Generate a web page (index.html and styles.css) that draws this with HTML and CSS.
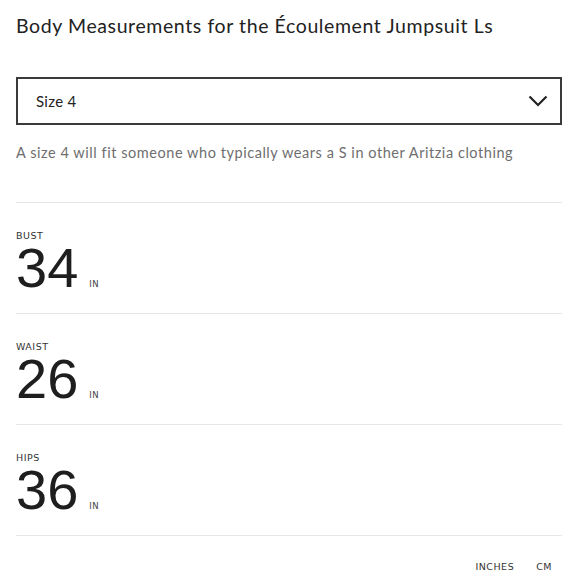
FILE: index.html
```html
<!DOCTYPE html>
<html lang="en">
<head>
<meta charset="utf-8">
<link rel="stylesheet" href="styles.css">
</head>
<body>
<main class="page">
  <h1 class="title">Body Measurements for the Écoulement Jumpsuit Ls</h1>
  <div class="select">
    <span class="select-value">Size 4</span>
    <svg class="chevron" width="20" height="12" viewBox="0 0 20 12"><path d="M1.5 1.5 L10 10 L18.5 1.5" fill="none" stroke="#222" stroke-width="2.2"/></svg>
  </div>
  <p class="fit-note">A size 4 will fit someone who typically wears a S in other Aritzia clothing</p>
  <section class="measure">
    <div class="label">BUST</div>
    <div class="value"><span class="num">34</span><span class="unit">IN</span></div>
  </section>
  <section class="measure">
    <div class="label">WAIST</div>
    <div class="value"><span class="num">26</span><span class="unit">IN</span></div>
  </section>
  <section class="measure">
    <div class="label">HIPS</div>
    <div class="value"><span class="num">36</span><span class="unit">IN</span></div>
  </section>
  <div class="units">
    <span class="unit-opt active">INCHES</span>
    <span class="unit-opt">CM</span>
  </div>
</main>
</body>
</html>
```
FILE: styles.css
```css
html, body {
  margin: 0;
  padding: 0;
  background: #fff;
}
body {
  font-family: "Lato", "Liberation Sans", sans-serif;
  color: #222;
}
.page {
  padding: 0 18px 0 16px;
}
.title {
  margin: 0;
  padding-top: 12px;
  font-size: 19.5px;
  font-weight: 400;
  line-height: 28px;
  letter-spacing: 0.6px;
  color: #222;
}
.select {
  margin-top: 37px;
  height: 44px;
  border: 2px solid #3a3a3a;
  display: flex;
  align-items: center;
  justify-content: space-between;
  padding: 0 12px 0 18px;
}
.select-value {
  font-size: 15px;
  letter-spacing: 0.3px;
  color: #222;
}
.fit-note {
  margin: 17px 0 0;
  font-size: 14.5px;
  line-height: 22px;
  letter-spacing: 0.55px;
  color: #6e6e6e;
  padding-bottom: 38px;
  border-bottom: 1px solid #e6e6e6;
}
.measure {
  height: 111px;
  border-bottom: 1px solid #e6e6e6;
  box-sizing: border-box;
  padding-top: 27px;
}
.label {
  font-family: "DejaVu Sans", sans-serif;
  font-size: 9.5px;
  letter-spacing: 0.5px;
  line-height: 12px;
  color: #333;
}
.value {
  display: flex;
  align-items: baseline;
  gap: 11px;
}
.num {
  font-family: "Liberation Sans", sans-serif;
  font-size: 56px;
  line-height: 52px;
  color: #1e1e1e;
}
.unit {
  font-family: "DejaVu Sans", sans-serif;
  font-size: 8.5px;
  letter-spacing: 0.4px;
  color: #444;
}
.units {
  display: flex;
  justify-content: flex-end;
  gap: 22px;
  padding: 25px 10px 0 0;
  font-family: "DejaVu Sans", sans-serif;
  font-size: 9.5px;
  letter-spacing: 0.5px;
}
.unit-opt {
  color: #333;
}
.unit-opt.active {
  text-decoration: underline;
  text-underline-offset: 3px;
}
```
